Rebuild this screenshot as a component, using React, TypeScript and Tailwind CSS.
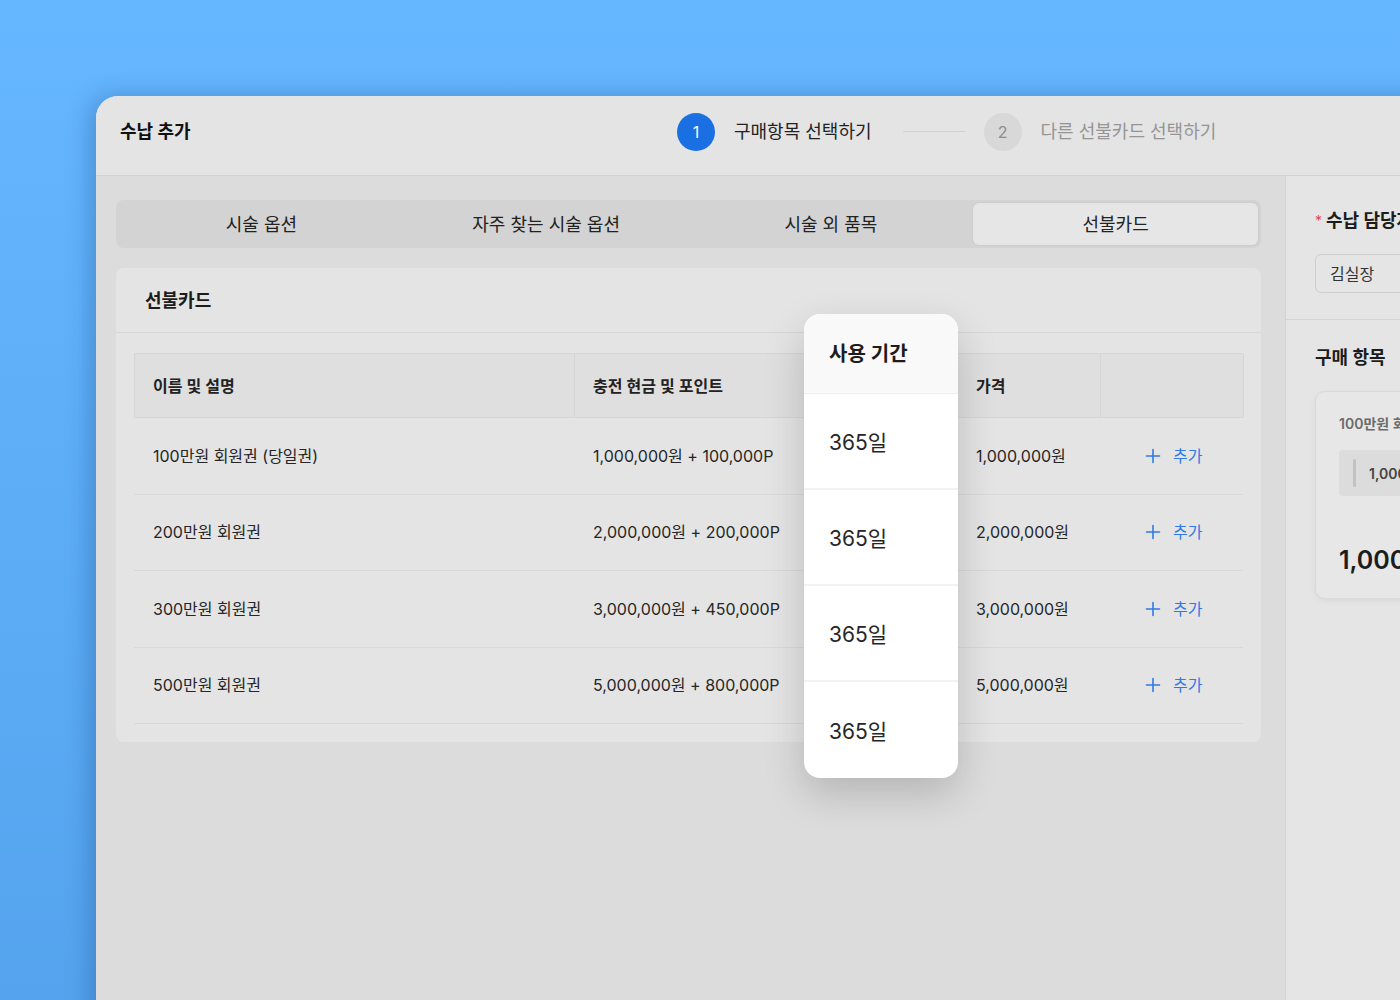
import React from "react";

const rows = [
  { name: "100만원 회원권 (당일권)", charge: "1,000,000원 + 100,000P", period: "365일", price: "1,000,000원" },
  { name: "200만원 회원권", charge: "2,000,000원 + 200,000P", period: "365일", price: "2,000,000원" },
  { name: "300만원 회원권", charge: "3,000,000원 + 450,000P", period: "365일", price: "3,000,000원" },
  { name: "500만원 회원권", charge: "5,000,000원 + 800,000P", period: "365일", price: "5,000,000원" },
];

const tabs = ["시술 옵션", "자주 찾는 시술 옵션", "시술 외 품목", "선불카드"];

function PlusIcon() {
  return (
    <svg width="16" height="16" viewBox="0 0 16 16" fill="none" stroke="currentColor" strokeWidth="1.6" strokeLinecap="round">
      <path d="M8 1.5v13M1.5 8h13" />
    </svg>
  );
}

export default function App() {
  return (
    <div
      className="relative h-[1000px] w-[1400px] overflow-hidden bg-gradient-to-b from-[#65b7ff] to-[#55a3ee] pl-[96px] pt-[96px]"
      style={{ fontFamily: "Inter, 'Noto Sans CJK KR', 'Noto Sans', sans-serif" }}
    >
      {/* Window */}
      <div className="flex h-[980px] w-[1560px] flex-col overflow-hidden rounded-tl-[22px] bg-[#dcdcdc] shadow-[-6px_0_24px_rgba(0,40,100,0.25)]">
        {/* Header */}
        <header className="flex h-[80px] shrink-0 items-center border-b border-[#d2d2d2] bg-[#e4e4e4] pb-[8px] pl-6">
          <h1 className="w-[557px] text-[18px] font-bold text-[#111]">수납 추가</h1>
          <div className="flex items-center">
            <span className="flex h-[38px] w-[38px] items-center justify-center rounded-full bg-[#1a6fe3] text-[16px] text-white">1</span>
            <span className="ml-[19px] text-[18px] text-[#222]">구매항목 선택하기</span>
            <span className="ml-[31px] mr-[19px] h-px w-[62px] bg-[#d2d2d2]" />
            <span className="flex h-[38px] w-[38px] items-center justify-center rounded-full bg-[#d8d8d8] text-[16px] text-[#8d8d8d]">2</span>
            <span className="ml-[19px] text-[18px] text-[#959595]">다른 선불카드 선택하기</span>
          </div>
        </header>

        <div className="flex flex-1">
          {/* Left body */}
          <section className="w-[1190px] shrink-0 border-r border-[#d2d2d2] pl-5 pr-6 pt-6">
            <div className="grid h-[48px] grid-cols-4 rounded-[8px] bg-[#d3d3d3] p-[3px]">
              {tabs.map((t, i) => (
                <div
                  key={t}
                  className={
                    i === 3
                      ? "flex items-center justify-center rounded-[6px] bg-[#e6e6e6] text-[18px] text-[#222] shadow-[0_0_0_1px_rgba(0,0,0,0.03)]"
                      : "flex items-center justify-center text-[18px] text-[#222]"
                  }
                >
                  {t}
                </div>
              ))}
            </div>

            <div className="relative mt-5 rounded-[8px] bg-[#e4e4e4] pb-[18px]">
              <div className="flex h-[65px] items-center border-b border-[#d8d8d8] pl-[29px] text-[18px] font-semibold text-[#1c1c1c]">
                선불카드
              </div>
              <div className="px-[18px] pt-5">
                <div className="grid h-[65px] grid-cols-[440px_230px_154px_142px_144px] border-y border-[#d6d6d6] bg-[#dfdfdf] text-[16px] font-semibold text-[#222]">
                  <div className="flex items-center border-l border-[#d6d6d6] pl-[18px]">이름 및 설명</div>
                  <div className="flex items-center border-l border-[#d6d6d6] pl-[18px]">충전 현금 및 포인트</div>
                  <div />
                  <div className="flex items-center pl-[18px]">가격</div>
                  <div className="border-x border-[#d6d6d6]" />
                </div>
                {rows.map((r) => (
                  <div
                    key={r.name}
                    className="grid h-[76.5px] grid-cols-[440px_230px_154px_142px_144px] border-b border-[#d9d9d9] text-[16px] text-[#262626]"
                  >
                    <div className="flex items-center pl-[19px]">{r.name}</div>
                    <div className="flex items-center whitespace-nowrap pl-[19px]">{r.charge}</div>
                    <div />
                    <div className="flex items-center pl-[18px]">{r.price}</div>
                    <div className="flex items-center gap-[12px] pl-[45px] text-[#2f7ae5]">
                      <PlusIcon />
                      <span>추가</span>
                    </div>
                  </div>
                ))}
              </div>

              {/* Highlighted column popover */}
              <div className="absolute left-[688px] top-[46px] w-[154px] overflow-hidden rounded-[16px] bg-white shadow-[0_16px_40px_rgba(0,0,0,0.18)]">
                <div className="flex h-[80px] items-center border-b border-[#eeeeee] bg-[#f9f9f9] pl-[25px] text-[20px] font-semibold text-[#1c1c1c]">
                  사용 기간
                </div>
                {rows.map((r, i) => (
                  <div
                    key={r.name}
                    className={
                      i < 3
                        ? "flex h-[96px] items-center border-b-2 border-[#f2f2f2] pl-[25px] pt-[4px] text-[21px] text-[#262626]"
                        : "flex h-[96px] items-center pl-[25px] pt-[4px] text-[21px] text-[#262626]"
                    }
                  >
                    {r.period}
                  </div>
                ))}
              </div>
            </div>
          </section>

          {/* Right panel */}
          <aside className="flex-1 bg-[#e5e5e5]">
            <div className="border-b border-[#d4d4d4] px-[29px] pb-[26px] pt-[31px]">
              <div className="flex items-center gap-[4px] text-[18px] font-bold text-[#1c1c1c]">
                <span className="text-[14px] font-normal text-[#e5484d]">*</span>
                <span>수납 담당자</span>
              </div>
              <div className="mt-[20px] flex h-[39px] w-[240px] items-center rounded-[6px] border border-[#cdcdcd] pl-[14px] text-[16px] text-[#333]">
                김실장
              </div>
            </div>
            <div className="px-[29px] pt-[24px]">
              <div className="text-[18px] font-bold text-[#1c1c1c]">구매 항목</div>
              <div className="mt-[20px] h-[208px] w-[260px] rounded-[10px] border border-[#dadada] bg-[#e7e7e7] px-[23px] pt-[21px] shadow-[0_2px_6px_rgba(0,0,0,0.06)]">
                <div className="whitespace-nowrap text-[14px] font-semibold text-[#6b6b6b]">100만원 회원권 (당일권)</div>
                <div className="mt-[16px] flex h-[46px] items-center rounded-[4px] bg-[#dcdcdc] pl-[14px]">
                  <span className="h-[28px] w-[3px] rounded bg-[#c2c2c2]" />
                  <span className="ml-[13px] text-[14px] font-semibold text-[#444]">1,000,000원 + 100,000P</span>
                </div>
                <div className="mt-[46px] text-[25px] font-semibold text-[#1c1c1c]">1,000,000원</div>
              </div>
            </div>
          </aside>
        </div>
      </div>
    </div>
  );
}
